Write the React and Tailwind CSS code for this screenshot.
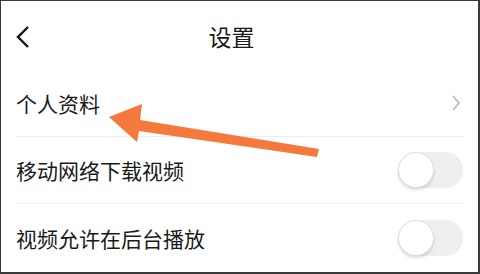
import React from "react";

const font = { fontFamily: '"Noto Sans CJK SC", "Noto Sans", sans-serif' };

function Toggle() {
  return (
    <div className="relative w-[65px] h-[36px] rounded-full bg-[#efefef]">
      <div className="absolute left-0 top-0 w-[36px] h-[36px] rounded-full bg-white border border-[#e0e0e0] shadow-[0_2px_3px_rgba(0,0,0,0.14)]" />
    </div>
  );
}

export default function App() {
  return (
    <div
      className="relative w-[480px] h-[274px] bg-white border-l border-t border-r-2 border-b-2 border-[#3a3a3a] flex flex-col overflow-hidden text-[#1a1a1a]"
      style={font}
    >
      <div className="relative h-[69px] flex items-center justify-center shrink-0 pr-[16px]">
        <svg className="absolute left-[14px] top-[24px]" width="16" height="24" viewBox="0 0 16 24">
          <polyline points="13,2 3,12 13,22" fill="none" stroke="#111" strokeWidth="2.4" strokeLinejoin="miter" />
        </svg>
        <span className="text-[23px] leading-none mt-[2px]">设置</span>
      </div>
      <div className="h-[67px] shrink-0 mx-[15px] border-b border-[#eeeeee] flex items-center justify-between">
        <span className="text-[21px] leading-none">个人资料</span>
        <svg width="10" height="18" viewBox="0 0 10 18" className="mr-[2px]">
          <polyline points="2,2 8,9 2,16" fill="none" stroke="#b8b8b8" strokeWidth="1.6" />
        </svg>
      </div>
      <div className="h-[67px] shrink-0 mx-[15px] border-b border-[#eeeeee] flex items-center justify-between">
        <span className="text-[21px] leading-none">移动网络下载视频</span>
        <Toggle />
      </div>
      <div className="flex-1 mx-[15px] flex items-center justify-between">
        <span className="text-[21px] leading-none">视频允许在后台播放</span>
        <Toggle />
      </div>
      <svg className="absolute left-0 top-0 pointer-events-none" width="480" height="274" viewBox="0 0 480 274">
        <polygon
          points="109,117 142,104 140,120 319,149 317,157 139,131 137,142"
          fill="#f5783d"
          transform="translate(-1,-1)"
        />
      </svg>
    </div>
  );
}
